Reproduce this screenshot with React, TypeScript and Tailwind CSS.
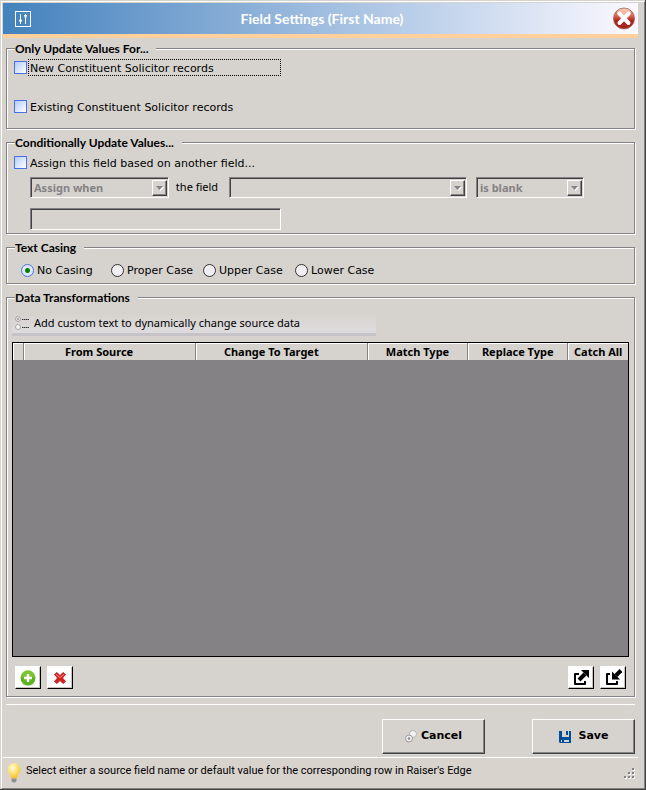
import type { ReactNode } from 'react';

interface GroupProps {
  title: string;
  className?: string;
  children: ReactNode;
}

const Group = ({ title, className = '', children }: GroupProps) => (
  <fieldset
    className={`min-w-0 border border-[#848284] shadow-[1px_1px_0_#fff,inset_1px_1px_0_#fff] ${className}`}
  >
    <legend className="ml-2 h-[14px] bg-[#d6d3ce] pr-2 font-['Lato',sans-serif] text-[12px] leading-4 font-bold">
      {title}
    </legend>
    {children}
  </fieldset>
);

interface CheckProps {
  label: string;
  focused?: boolean;
}

const Check = ({ label, focused }: CheckProps) => (
  <label className="flex h-[17px] items-center">
    <input
      type="checkbox"
      className="size-[13px] shrink-0 appearance-none border border-[#4a71e7] bg-linear-to-br from-[#b5cbf7] to-white checked:bg-[#4a71e7]"
    />
    <span
      className={`ml-px h-[17px] border border-dotted px-px leading-[17px] ${focused ? 'w-[253px] border-black' : 'border-transparent'}`}
    >
      {label}
    </span>
  </label>
);

interface DropDownProps {
  label: string;
  value: string;
  className: string;
}

const DropDown = ({ label, value, className }: DropDownProps) => (
  <div className={`relative h-[21px] ${className}`}>
    <select
      aria-label={label}
      disabled
      className="size-full appearance-none border border-t-[#848284] border-r-white border-b-white border-l-[#848284] bg-[#d6d3ce] px-[3px] font-['Noto_Sans',sans-serif] text-[11px] leading-[19px] font-bold text-[#848284] opacity-100 shadow-[inset_1px_1px_0_#424142]"
    >
      <option>{value}</option>
    </select>
    <span className="pointer-events-none absolute top-[3px] right-[2px] flex h-4 w-[15px] items-center justify-center border border-t-white border-r-[#424142] border-b-[#424142] border-l-white bg-[#d6d3ce] shadow-[inset_-1px_-1px_0_#848284]">
      <svg width="8" height="5" viewBox="0 0 8 5">
        <path d="M1 1h7L4.500 5z" fill="#fff" />
        <path d="M0 0h7L3.500 4z" fill="#848284" />
      </svg>
    </span>
  </div>
);

interface ToolButtonProps {
  label: string;
  children: ReactNode;
}

const ToolButton = ({ label, children }: ToolButtonProps) => (
  <button
    type="button"
    aria-label={label}
    className="flex h-[23px] w-[26px] items-center justify-center border border-t-white border-r-black border-b-black border-l-white bg-white shadow-[inset_-1px_-1px_0_#c6c3bd]"
  >
    {children}
  </button>
);

const ActionButton = ({ label, children }: ToolButtonProps) => (
  <button
    type="button"
    className="flex h-[35px] w-[103px] items-center justify-center border border-t-white border-r-[#424142] border-b-[#424142] border-l-white font-['DejaVu_Sans',sans-serif] text-[11px] font-bold shadow-[inset_-1px_-1px_0_#848284]"
  >
    {children}
    {label}
  </button>
);

const SlidersIcon = () => (
  <svg width="16" height="16" viewBox="0 0 16 16" fill="none" stroke="#fff">
    <rect x="0.500" y="0.500" width="15" height="15" />
    <path d="M5.500 3v10M10.500 3v10" />
    <path d="M4 9.500h3M4.500 10.500h2M9 4.500h3M9.500 5.500h2" />
    <path d="M4.500 8.500h2M9.500 6.500h2" strokeOpacity="0.6" />
  </svg>
);

const CloseIcon = () => (
  <svg width="22" height="23" viewBox="0 0 22 23">
    <defs>
      <linearGradient id="closeFill" x1="0" y1="0" x2="0" y2="1">
        <stop offset="0" stopColor="#f3a58c" />
        <stop offset="0.4" stopColor="#d8604a" />
        <stop offset="0.6" stopColor="#b5201c" />
        <stop offset="1" stopColor="#a8221e" />
      </linearGradient>
    </defs>
    <circle cx="11" cy="11.500" r="10.500" fill="url(#closeFill)" stroke="#8f5a58" strokeWidth="0.800" />
    <ellipse cx="11" cy="6" rx="7" ry="4.500" fill="#ffe3d0" fillOpacity="0.550" />
    <path d="M6.500 6.500l9 9.500M15.500 6.500l-9 9.500" stroke="#fff" strokeWidth="4" strokeLinecap="round" />
  </svg>
);

const OptionsIcon = () => (
  <svg width="15" height="14" viewBox="0 0 15 14" fill="none">
    <circle cx="3" cy="3" r="2.500" fill="#e8e8e8" stroke="#a5a5a5" />
    <circle cx="3" cy="3" r="1" fill="#9a9a9a" />
    <circle cx="3" cy="11" r="2.500" fill="#f5f5f5" stroke="#a5a5a5" />
    <path d="M7 3.500h7M7 11.500h7" stroke="#8a8a8a" />
    <path d="M7 3.500h7M7 11.500h7" stroke="#333" strokeDasharray="1 1" />
  </svg>
);

const AddIcon = () => (
  <svg width="16" height="16" viewBox="0 0 16 16">
    <ellipse cx="8" cy="14.500" rx="6" ry="1.500" fill="#ddd" />
    <circle cx="8" cy="8" r="7.500" fill="#5fb31e" />
    <path d="M1 7a7 7 0 0 1 14 0z" fill="#8bd040" fillOpacity="0.600" />
    <path d="M8 4v8M4 8h8" stroke="#fff" strokeWidth="2.400" />
  </svg>
);

const DeleteIcon = () => (
  <svg width="14" height="14" viewBox="0 0 14 14">
    <path
      d="M1.500 3.500L4 1.500l3 3 3-3 2.500 2L9.500 7l3 3.500L10 12.500l-3-3-3 3-2.500-2L4.500 7z"
      fill="#dc2020"
      stroke="#a81818"
      strokeWidth="0.800"
    />
    <path d="M3 3.500l4 3 4-3" fill="none" stroke="#f58a80" />
  </svg>
);

const ExportIcon = () => (
  <svg width="17" height="17" viewBox="0 0 17 17" fill="none" stroke="#000" strokeWidth="2">
    <path d="M6 5H2v10h10v-3" strokeLinejoin="round" />
    <path d="M6 11l6-6" strokeWidth="4" />
    <path d="M8 1h8v8z" fill="#000" stroke="none" />
  </svg>
);

const ImportIcon = () => (
  <svg width="17" height="17" viewBox="0 0 17 17" fill="none" stroke="#000" strokeWidth="2">
    <path d="M5 5H2v10h10v-3" strokeLinejoin="round" />
    <path d="M16 1.500L11 6.500" strokeWidth="4" />
    <path d="M7 2.500V10.500h8z" fill="#000" stroke="none" />
  </svg>
);

const GearsIcon = () => (
  <svg width="12" height="13" viewBox="0 0 12 13">
    <circle cx="8" cy="4" r="3.500" fill="#f2f2f2" stroke="#b5b5b5" />
    <circle cx="4" cy="8.500" r="3.500" fill="#ececec" stroke="#9c9c9c" />
    <circle cx="4" cy="8.500" r="1.200" fill="#8c8c8c" />
  </svg>
);

const SaveIcon = () => (
  <svg width="12" height="12" viewBox="0 0 12 12">
    <path d="M0 0h12v12H1l-1-1z" fill="#004f96" />
    <path d="M3 0h7v6H3z" fill="#d6d3ce" />
    <path d="M2 9h8v2H2z" fill="#c8d4e0" />
    <path d="M3 9h2v2H3z" fill="#004f96" />
    <path d="M7 0h2v4H7z" fill="#004f96" />
  </svg>
);

const BulbIcon = () => (
  <svg width="14" height="20" viewBox="0 0 14 20">
    <defs>
      <radialGradient id="bulbFill" cx="0.4" cy="0.3" r="0.7">
        <stop offset="0" stopColor="#fffbe0" />
        <stop offset="0.5" stopColor="#ffe27a" />
        <stop offset="1" stopColor="#fbc02d" />
      </radialGradient>
    </defs>
    <path d="M7 0a6.500 6.500 0 0 1 6.500 6.500c0 3.500-3 4.500-3.500 9H4C3.500 11 .5 10 .5 6.500A6.500 6.500 0 0 1 7 0z" fill="url(#bulbFill)" />
    <path d="M4.500 15.500h5v2.500l-1.500 1.500H6L4.500 18z" fill="#8e8e90" />
  </svg>
);

const SizeGrip = () => (
  <svg width="12" height="12" viewBox="0 0 12 12">
    {[[8, 0], [4, 4], [8, 4], [0, 8], [4, 8], [8, 8]].map(([x, y]) => (
      <g key={`${x}-${y}`}>
        <rect x={x + 1} y={y + 1} width="2" height="2" fill="#fff" />
        <rect x={x} y={y} width="2" height="2" fill="#848284" />
      </g>
    ))}
  </svg>
);

const casings = [
  { label: 'No Casing', width: 'w-[90px]' },
  { label: 'Proper Case', width: 'w-[92px]' },
  { label: 'Upper Case', width: 'w-[92px]' },
  { label: 'Lower Case', width: 'w-[92px]' },
];

const columns = [
  { label: 'From Source', pad: 'pr-5' },
  { label: 'Change To Target', pad: 'pr-5' },
  { label: 'Match Type', pad: '' },
  { label: 'Replace Type', pad: '' },
  { label: 'Catch All', pad: '' },
];

export default function App() {
  return (
    <div className="flex min-h-screen flex-col border-r border-b border-[#424142] bg-[#d6d3ce] pt-px pl-px font-['DejaVu_Sans',sans-serif] text-[11px] text-black">
      <div className="flex flex-1 flex-col border border-t-white border-r-[#848284] border-b-[#848284] border-l-white">
        <header className="mt-px mr-1.5 ml-px flex h-[35px] items-center border-b-4 border-[#ffcf9c] bg-linear-to-r from-[#4282bd] to-[#fbf9ff] pr-[3px] pl-3">
          <SlidersIcon />
          <h1 className="flex-1 text-center font-['Lato',sans-serif] text-[14px] leading-4 font-bold text-white">
            Field Settings (First Name)
          </h1>
          <button type="button" aria-label="Close">
            <CloseIcon />
          </button>
        </header>

        <main className="mt-[3px] mr-[9px] ml-1 flex flex-1 flex-col gap-[6px]">
          <Group title="Only Update Values For..." className="h-[88px]">
            <div className="flex flex-col gap-[22px] pt-1 pl-[7px]">
              <Check label="New Constituent Solicitor records" focused />
              <Check label="Existing Constituent Solicitor records" />
            </div>
          </Group>

          <Group title="Conditionally Update Values..." className="h-[99px]">
            <div className="pt-[5px] pl-[7px]">
              <Check label="Assign this field based on another field..." />
              <div className="mt-1.5 ml-4 flex items-center">
                <DropDown label="Condition" value="Assign when" className="w-[139px]" />
                <span className="w-[60px] pr-1 text-center font-['Noto_Sans',sans-serif]">the field</span>
                <DropDown label="Field" value="" className="w-[238px]" />
                <DropDown label="Comparison" value="is blank" className="ml-[9px] w-[108px]" />
              </div>
              <input
                type="text"
                aria-label="Comparison value"
                disabled
                className="mt-[10px] ml-4 block h-[22px] w-[251px] border border-t-[#848284] border-r-white border-b-white border-l-[#848284] px-1 shadow-[inset_1px_1px_0_#424142]"
              />
            </div>
          </Group>

          <Group title="Text Casing" className="h-[44px]">
            <div className="flex pt-[9px] pl-[14px]">
              {casings.map(({ label, width }, i) => (
                <label key={label} className={`flex h-[15px] items-center gap-[3px] leading-[17px] whitespace-nowrap ${width}`}>
                  <input
                    type="radio"
                    name="casing"
                    defaultChecked={i === 0}
                    className="size-[13px] shrink-0 appearance-none rounded-full border border-[#333] bg-[#f0eef0] checked:border-[#4a71e7] checked:bg-[radial-gradient(circle,#008200_0_2px,#dfe9fb_3px)]"
                  />
                  {label}
                </label>
              ))}
            </div>
          </Group>

          <Group title="Data Transformations" className="flex-1">
            <div className="px-[5px] pt-[9px]">
              <p className="flex h-[23px] w-[364px] items-center gap-1 border-b-3 border-[#c6c3c8] bg-linear-to-b from-[#d6d3ce] to-[#dedbde] pl-[3px] font-['Noto_Sans',sans-serif]">
                <OptionsIcon />
                Add custom text to dynamically change source data
              </p>
              <div className="mt-[6px] h-[calc(100vh-475px)] min-h-[120px] border border-black bg-[#848284]">
                <table className="w-full table-fixed border-collapse bg-[#d6d3ce] font-['Noto_Sans',sans-serif] leading-4">
                  <colgroup>
                    <col className="w-[10px]" />
                    <col className="w-[28%]" />
                    <col className="w-[28%]" />
                    <col className="w-[16.3%]" />
                    <col className="w-[16.3%]" />
                    <col />
                  </colgroup>
                  <thead>
                    <tr className="h-[17px]">
                      <td className="border-r border-[#848284] shadow-[inset_1px_1px_0_#fff]" />
                      {columns.map(({ label, pad }) => (
                        <th
                          key={label}
                          scope="col"
                          className={`border-r border-[#848284] pt-px font-bold whitespace-nowrap shadow-[inset_1px_1px_0_#fff] last:border-r-0 ${pad}`}
                        >
                          {label}
                        </th>
                      ))}
                    </tr>
                  </thead>
                </table>
              </div>
              <div className="flex gap-1.5 px-[3px] pt-[9px] pb-[7px]">
                <ToolButton label="Add row">
                  <AddIcon />
                </ToolButton>
                <ToolButton label="Delete row">
                  <DeleteIcon />
                </ToolButton>
                <div className="flex-1" />
                <ToolButton label="Export">
                  <ExportIcon />
                </ToolButton>
                <ToolButton label="Import">
                  <ImportIcon />
                </ToolButton>
              </div>
            </div>
          </Group>
        </main>

        <div className="mt-[7px] mr-[9px] ml-1 flex justify-end gap-[47px] border-t border-white pt-[14px] pb-[3px]">
          <ActionButton label="Cancel">
            <span className="mr-1">
              <GearsIcon />
            </span>
          </ActionButton>
          <ActionButton label="Save">
            <span className="mr-2">
              <SaveIcon />
            </span>
          </ActionButton>
        </div>

        <footer className="mr-1.5 ml-px flex h-[31px] items-center border-t border-white bg-[#d9d3ce] pr-[2px] pl-1 font-['Roboto',sans-serif]">
          <BulbIcon />
          <p className="ml-[5px] flex-1 pb-1 leading-4">
            Select either a source field name or default value for the corresponding row in Raiser's Edge
          </p>
          <span className="self-end pb-2">
            <SizeGrip />
          </span>
        </footer>
      </div>
    </div>
  );
}
